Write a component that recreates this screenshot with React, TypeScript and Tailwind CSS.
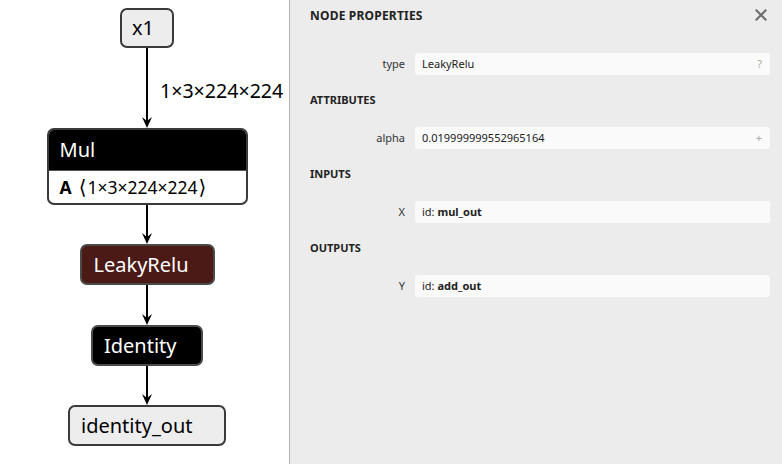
import React from "react";

const gFont = { fontFamily: '"Noto Sans", "DejaVu Sans", sans-serif' };

function Edge({ h, label }: { h: number; label?: string }) {
  return (
    <div className="relative w-[20px] shrink-0" style={{ height: h }}>
      <svg width="20" height={h} className="block">
        <line x1="10" y1="0" x2="10" y2={h - 3} stroke="#000" strokeWidth="2" />
        <polygon points={`10,${h} 5,${h - 11} 10,${h - 7} 15,${h - 11}`} fill="#000" />
      </svg>
      {label && (
        <div className="absolute left-[23px] top-[31px] whitespace-nowrap text-[19.6px] leading-[24px] text-black">
          {label}
        </div>
      )}
    </div>
  );
}

export default function App() {
  return (
    <div className="flex w-[782px] h-[464px] overflow-hidden" style={gFont}>
      <div className="w-[290px] h-full bg-white border-r border-[#b4b4b4] flex flex-col items-center pt-[8px] pl-[5px] shrink-0">
        <div className="w-[54px] h-[40px] box-border border-2 border-[#3a3a3a] rounded-[7px] bg-[#ededed] flex items-center pl-[10px] text-[20px] text-black">
          x1
        </div>
        <Edge h={80} label="1×3×224×224" />
        <div className="w-[201px] h-[77px] box-border border-2 border-[#3a3a3a] rounded-[7px] overflow-hidden flex flex-col bg-white">
          <div className="h-[40px] bg-black text-white text-[20px] flex items-center pl-[11px]">Mul</div>
          <div className="flex-1 flex items-center pl-[11px] text-[17.5px] text-black border-t border-[#555]">
            <span className="font-bold">A</span>
            <span className="ml-[7px] mr-[1px] text-[20px] leading-none" style={{ fontFamily: '"DejaVu Sans", sans-serif' }}>⟨</span>
            <span>1×3×224×224</span>
            <span className="ml-[1px] text-[20px] leading-none" style={{ fontFamily: '"DejaVu Sans", sans-serif' }}>⟩</span>
          </div>
        </div>
        <Edge h={39} />
        <div className="w-[135px] h-[41px] box-border border-2 border-[#4a4a4a] rounded-[7px] bg-[#4b1a16] flex items-center pl-[12px] text-[20px] text-white">
          LeakyRelu
        </div>
        <Edge h={40} />
        <div className="w-[112px] h-[41px] box-border border-2 border-[#4a4a4a] rounded-[7px] bg-black flex items-center pl-[11px] text-[20px] text-white">
          Identity
        </div>
        <Edge h={39} />
        <div className="w-[158px] h-[41px] box-border border-2 border-[#3a3a3a] rounded-[7px] bg-[#ededed] flex items-center pl-[11px] text-[20px] text-black">
          identity_out
        </div>
      </div>
      <div className="flex-1 h-full bg-[#ececec] pt-[8px] pl-[20px] pr-[12px] text-[#222]">
        <div className="h-[16px] flex items-center justify-between">
          <div className="text-[12px] font-bold tracking-[0.2px] text-[#222]">NODE PROPERTIES</div>
          <svg width="12" height="12" viewBox="0 0 12 12" className="mr-[3px] -mt-[3px]">
            <path d="M1.5 1.5 L10.5 10.5 M10.5 1.5 L1.5 10.5" stroke="#6f6f6f" strokeWidth="2.2" strokeLinecap="square" />
          </svg>
        </div>
        <Row label="type" mt="mt-[29px]" value={<span>LeakyRelu</span>} suffix="?" />
        <Title text="ATTRIBUTES" />
        <Row label="alpha" mt="mt-[19px]" value={<span>0.019999999552965164</span>} suffix="+" />
        <Title text="INPUTS" />
        <Row
          label="X"
          mt="mt-[19px]"
          value={
            <span>
              id: <span className="font-bold">mul_out</span>
            </span>
          }
        />
        <Title text="OUTPUTS" />
        <Row
          label="Y"
          mt="mt-[19px]"
          value={
            <span>
              id: <span className="font-bold">add_out</span>
            </span>
          }
        />
      </div>
    </div>
  );
}

function Title({ text }: { text: string }) {
  return <div className="mt-[17px] h-[16px] leading-[16px] text-[11px] font-bold text-[#222]">{text}</div>;
}

function Row({
  label,
  value,
  suffix,
  mt,
}: {
  label: string;
  value: React.ReactNode;
  suffix?: string;
  mt: string;
}) {
  return (
    <div className={`flex items-center gap-[10px] ${mt}`}>
      <div className="w-[95px] text-right text-[11px] text-[#333]">{label}</div>
      <div className="flex-1 h-[22px] rounded-[3px] bg-[#fafafa] flex items-center justify-between pl-[7px] pr-[8px] text-[11px] text-[#222]">
        {value}
        {suffix && <span className="text-[#a8a8a8] text-[11px]">{suffix}</span>}
      </div>
    </div>
  );
}
